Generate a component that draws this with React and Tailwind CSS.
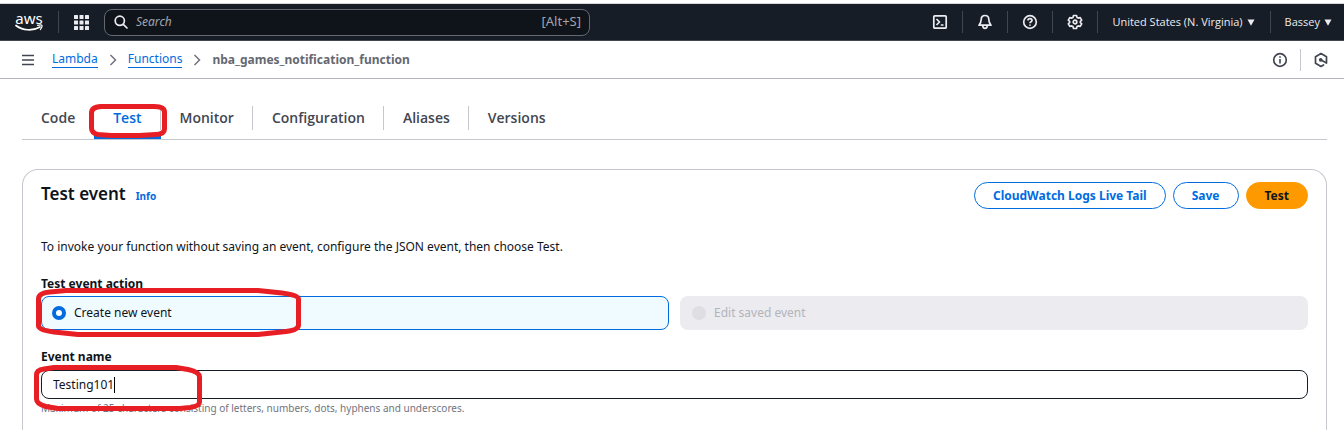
import { useState } from "react";

const tabs = ["Code", "Test", "Monitor", "Configuration", "Aliases", "Versions"];

function AwsLogo() {
  return (
    <span className="flex w-7 flex-col items-center text-white">
      <span className="text-[15px] leading-3">aws</span>
      <svg viewBox="0 0 28 8" className="h-2 w-7" fill="none" stroke="currentColor" aria-hidden="true">
        <path d="M1 1.5C7 6.600 18 7.200 25 3" strokeWidth="1.700" strokeLinecap="round" />
        <path d="M22.500 1.300c2-.5 4-.6 4.400 0 .3.700-.3 2.700-1.500 4.200" strokeWidth="1.200" strokeLinecap="round" />
      </svg>
    </span>
  );
}

function GridIcon() {
  return (
    <svg viewBox="0 0 15 15" className="size-[15px]" fill="currentColor" aria-hidden="true">
      {[0, 5.5, 11].map((y) => [0, 5.5, 11].map((x) => <rect key={x + "-" + y} x={x} y={y} width="4" height="4" rx="0.500" />))}
    </svg>
  );
}

function Icon({ children, size = "size-4" }) {
  return (
    <svg viewBox="0 0 16 16" className={size} fill="none" stroke="currentColor" strokeWidth="1.700" strokeLinejoin="round" strokeLinecap="round" aria-hidden="true">
      {children}
    </svg>
  );
}

function Caret() {
  return (
    <svg viewBox="0 0 8 7" className="h-[7px] w-2" fill="currentColor" aria-hidden="true">
      <path d="M.5.5h7L4 6.800z" />
    </svg>
  );
}

function Chevron() {
  return (
    <svg viewBox="0 0 8 12" className="h-3 w-2" fill="none" stroke="#72747e" strokeWidth="1.500" aria-hidden="true">
      <path d="M1.500 1l5 5-5 5" />
    </svg>
  );
}

function NavButton({ label, children }) {
  return (
    <button type="button" aria-label={label} className="flex h-[22px] w-[45px] items-center justify-center border-r border-[#424650]">
      {children}
    </button>
  );
}

function Marker({ className, viewBox, d }) {
  return (
    <svg className={"pointer-events-none absolute max-w-none " + className} viewBox={viewBox} fill="none" stroke="#e81e25" strokeWidth="5" strokeLinejoin="round" aria-hidden="true">
      <path d={d} />
    </svg>
  );
}

export default function App() {
  const [name, setName] = useState("Testing101");
  return (
    <div className="flex min-h-screen flex-col bg-white font-['Noto_Sans','Open_Sans',sans-serif] text-[#0f141a]">
      <header className="mt-[3px] flex h-[38px] items-center border-t border-b border-t-[#d5d7d9] border-b-[#424650] bg-[#161d26] pl-[15px] text-[#ebebf0]">
        <a href="#home" aria-label="AWS home"><AwsLogo /></a>
        <span className="ml-[15px] h-[22px] w-px bg-[#424650]" />
        <button type="button" aria-label="Services" className="ml-[15px]"><GridIcon /></button>
        <label className="ml-[15px] flex h-[27px] w-[486px] shrink items-center rounded-lg border border-[#656871] bg-[#0f141a] px-2">
          <Icon>
            <circle cx="6.800" cy="6.800" r="4.600" />
            <path d="M10.300 10.300l3.700 3.700" />
          </Icon>
          <input type="search" aria-label="Search" placeholder="Search" className="ml-[7px] min-w-0 flex-1 bg-transparent text-xs text-white italic outline-none placeholder:text-[#a4a4ad]" />
          <span className="text-[13px] text-[#a4a4ad]">[Alt+S]</span>
        </label>
        <div className="ml-auto flex items-center font-['Open_Sans','Noto_Sans',sans-serif]">
          <NavButton label="CloudShell">
            <Icon>
              <rect x="1.800" y="1.800" width="12.400" height="12.400" rx="1" />
              <path d="M4.500 5l3 3-3 3M8.800 11h2.700" strokeLinecap="butt" />
            </Icon>
          </NavButton>
          <NavButton label="Notifications">
            <Icon>
              <path d="M8 1.500C5.500 1.500 4.200 3.300 4.200 5.500c0 2.800-.9 4-2.200 5.700h12c-1.300-1.700-2.200-2.900-2.200-5.700C11.800 3.300 10.500 1.500 8 1.500z" />
              <path d="M5.800 11.500c0 1.800.8 2.900 2.200 2.900s2.200-1.100 2.200-2.900" />
            </Icon>
          </NavButton>
          <NavButton label="Help">
            <Icon>
              <circle cx="8" cy="8" r="6.300" />
              <path d="M6 6.500C6 5.300 6.900 4.700 8 4.700s2 .7 2 1.700C10 7.700 8 7.700 8 9.200M8 10.500v1.300" strokeLinecap="butt" />
            </Icon>
          </NavButton>
          <NavButton label="Settings">
            <Icon>
              <path d="M6.500 1.500h3l.5 1.900 1.300.7 1.900-.5 1.500 2.500L13.300 7.500v1l1.400 1.400-1.500 2.500-1.900-.5-1.300.7-.5 1.900h-3L6 12.600l-1.300-.7-1.900.5-1.500-2.500L2.700 8.500v-1L1.300 6.100l1.500-2.500 1.900.5L6 3.400z" />
              <circle cx="8" cy="8" r="1.800" />
            </Icon>
          </NavButton>
          <button type="button" className="flex h-[22px] items-center gap-1 border-r border-[#424650] pr-[15px] pl-3.5 text-[11px] font-medium whitespace-nowrap">
            United States (N. Virginia) <Caret />
          </button>
          <button type="button" className="flex h-[22px] items-center gap-1 pr-3 pl-3.5 text-[11px] font-medium">
            Bassey <Caret />
          </button>
        </div>
      </header>

      <div className="flex h-[38px] items-center border-b border-[#b4b4bb] pr-[15px] pl-[21px]">
        <button type="button" aria-label="Open navigation" className="text-[#424650]">
          <svg viewBox="0 0 14 12" className="h-3 w-3.5" fill="none" stroke="currentColor" strokeWidth="1.600" aria-hidden="true">
            <path d="M1 1.500h12M1 6h12M1 10.500h12" />
          </svg>
        </button>
        <nav aria-label="Breadcrumb" className="ml-[17px] flex items-center gap-[11px] text-xs leading-4 text-[#006ce0]">
          <a href="#lambda" className="border-b border-[#006ce0]">Lambda</a>
          <Chevron />
          <a href="#functions" className="border-b border-[#006ce0]">Functions</a>
          <Chevron />
          <span className="font-bold text-[#656871]">nba_games_notification_function</span>
        </nav>
        <div className="ml-auto flex items-center text-[#424650]">
          <button type="button" aria-label="Info panel">
            <Icon>
              <circle cx="8" cy="8" r="6.300" />
              <path d="M8 4.200v1.600M8 7v4.600" strokeWidth="1.600" strokeLinecap="butt" />
            </Icon>
          </button>
          <span className="mx-3 h-[22px] w-px bg-[#c6c6cd]" />
          <button type="button" aria-label="Shortcuts">
            <Icon>
              <path d="M13.500 11V4.800L8 1.600 2.500 4.800v6.400L8 14.400l2.500-1.400" />
              <path d="M8 8l5.200 2.800" strokeWidth="1.700" />
              <circle cx="7.700" cy="7.800" r="1" fill="currentColor" />
            </Icon>
          </button>
        </div>
      </div>

      <main className="flex flex-1 flex-col pr-[17px] pl-[22px]">
        <div role="tablist" className="mt-[18px] flex h-[43px] items-center border-b border-[#c6c6cd] font-['Open_Sans','Noto_Sans',sans-serif]">
          {tabs.map((tab) => (
            <div key={tab} className="relative flex h-full items-center">
              <button
                type="button"
                role="tab"
                aria-selected={tab === "Test"}
                className={"h-6 border-[#c6c6cd] pr-[18px] pl-[19px] text-sm font-semibold " + (tab === "Versions" ? "" : "border-r ") + (tab === "Test" ? "text-[#006ce0]" : "text-[#424650]")}
              >
                {tab}
              </button>
              {tab === "Test" && (
                <>
                  <span className="absolute inset-x-0 bottom-0 h-[3px] bg-[#006ce0]" />
                  <Marker className="top-[7px] -left-[5px] h-[34px] w-[78px]" viewBox="0 0 78 34" d="M12 2.500H65Q75.500 2.500 75.500 8V25Q75.500 30 67 30.500L50 31.500H22L9 30.500Q2.500 29 2.500 24V9Q2.500 3 12 2.500Z" />
                </>
              )}
            </div>
          ))}
        </div>

        <section className="mt-[29px] flex-1 rounded-t-2xl border border-b-0 border-[#c6c6cd] px-[18px] pt-3">
          <div className="flex items-start">
            <h1 className="text-[17px] leading-6 font-semibold">Test event</h1>
            <a href="#info" className="mt-1.5 ml-2.5 text-[10px] leading-4 font-bold text-[#006ce0]">Info</a>
            <div className="ml-auto flex gap-[7px] text-xs font-bold">
              <button type="button" className="h-[27px] rounded-full border border-[#006ce0] px-[18px] text-[#006ce0]">CloudWatch Logs Live Tail</button>
              <button type="button" className="h-[27px] rounded-full border border-[#006ce0] px-[18px] text-[#006ce0]">Save</button>
              <button type="button" className="h-[27px] rounded-full border border-[#ff9900] bg-[#ff9900] px-[18px]">Test</button>
            </div>
          </div>
          <p className="mt-[27px] text-xs leading-[22px]">To invoke your function without saving an event, configure the JSON event, then choose Test.</p>

          <fieldset className="mt-[15px]">
            <legend className="text-xs leading-[22px] font-bold">Test event action</legend>
            <div className="mt-px grid grid-cols-2 gap-[11px] text-xs">
              <label className="relative flex h-[34px] items-center gap-2 rounded-lg border border-[#006ce0] bg-[#f0fbff] px-2.5">
                <input type="radio" name="action" defaultChecked className="size-3.5 appearance-none rounded-full border-[4px] border-[#006ce0] bg-white" />
                Create new event
                <Marker className="-top-[9px] -left-1.5 h-[49px] w-[266px]" viewBox="0 0 266 49" d="M30 2.500H222L246 5Q262.500 7 262.500 11V37Q262.500 42 250 43.500L222 46.500H42L18 44Q2.500 42 2.500 38V11Q2.500 5 14 4Z" />
              </label>
              <label className="flex h-[34px] items-center gap-2 rounded-lg bg-[#ebebf0] px-3 text-[#b4b4bb]">
                <input type="radio" name="action" disabled className="size-3.5 appearance-none rounded-full bg-[#dedee3]" />
                Edit saved event
              </label>
            </div>
          </fieldset>

          <label htmlFor="event-name" className="mt-4 block text-xs leading-[22px] font-bold">Event name</label>
          <div className="relative mt-0.5">
            <div className="flex h-[29px] items-center rounded-lg border border-[#161d26] px-[11px]">
              <input id="event-name" value={name} onChange={(e) => setName(e.target.value)} className="field-sizing-content bg-transparent text-xs outline-none" />
              <span className="h-4 w-px bg-black" />
            </div>
            <p className="mt-px text-[10px] leading-4 text-[#72747e]">Maximum of 25 characters consisting of letters, numbers, dots, hyphens and underscores.</p>
            <Marker className="-top-[5px] -left-[7px] h-[46px] w-[168px]" viewBox="0 0 168 46" d="M20 2.500H142L154 4.500Q165.500 7 165.500 12V37Q165.500 41 156 42.500L146 43.500H24L12 41.500Q2.500 39 2.500 34V10Q2.500 5 10 4Z" />
          </div>
        </section>
      </main>
    </div>
  );
}
